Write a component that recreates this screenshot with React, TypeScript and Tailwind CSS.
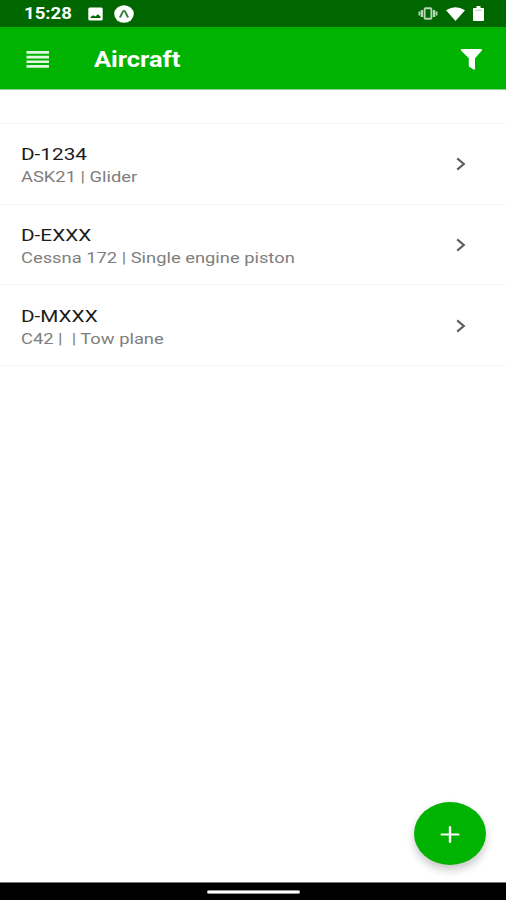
const aircraft = [
  { id: 'D-1234', info: 'ASK21 | Glider' },
  { id: 'D-EXXX', info: 'Cessna 172 | Single engine piston' },
  { id: 'D-MXXX', info: 'C42 |  | Tow plane' },
];

const StatusBar = () => (
  <div className="flex h-[27px] flex-none items-center bg-[#006700] pl-6 pr-[22px] text-white">
    <span className="w-[64px] flex-none">
      <span className="inline-block origin-left scale-x-[1.16] text-[16px] font-bold leading-[27px]">15:28</span>
    </span>
    {/* picture */}
    <svg className="mt-px h-[14px] w-[15px]" viewBox="0 0 15 14" fill="none">
      <rect x="0.3" y="0.5" width="14.4" height="13" rx="1.5" fill="#fff" />
      <path d="M2.5 11V10L5.3 8.300 7.300 9.600 10 7.300 12.500 9.800V11Z" fill="#006700" />
    </svg>
    {/* expo */}
    <svg className="ml-[11px] h-[18px] w-5" viewBox="0 0 20 18" fill="none">
      <ellipse cx="10" cy="9" rx="9.8" ry="8.7" fill="#fff" />
      <path d="M6.2 11.800C7.800 10 8.400 5.700 10 5.700S12.200 10 13.800 11.800" stroke="#34803a" strokeWidth="2" strokeLinecap="round" />
    </svg>
    <div className="flex-1" />
    {/* vibrate */}
    <svg className="h-[13px] w-5" viewBox="0 0 20 13" fill="none" stroke="#b5d5b5">
      <rect x="6.6" y="1.3" width="6.8" height="10.4" rx="1" strokeWidth="1.900" />
      <path d="M3.900 3V10M16.100 3V10" strokeWidth="2.200" />
      <path d="M1.500 4.500V8.500M18.500 4.500V8.500" strokeWidth="1.900" />
    </svg>
    {/* wifi */}
    <svg className="ml-2 h-[14px] w-[19px]" viewBox="0 0 19 14" fill="#fff">
      <path d="M0 3.3Q9.5-3 19 3.3L9.5 14Z" />
    </svg>
    {/* battery */}
    <svg className="ml-2 h-[15px] w-[11px]" viewBox="0 0 11 16" preserveAspectRatio="none" fill="#fff">
      <path d="M3.5 0h4v2H10q1 0 1 1v12q0 1-1 1H1q-1 0-1-1V3q0-1 1-1h2.5Z" />
      <path d="M2 4.5H9" stroke="#a8cba8" />
    </svg>
  </div>
);

const Header = () => (
  <div className="flex h-[63px] flex-none items-center border-b border-[#8fce8f] bg-[#00b300] pl-[26px] pr-[23px] pt-[3px] text-white">
    <svg className="h-[17px] w-[24px]" viewBox="0 0 24 17" fill="#e2f6e2">
      <path d="M.5 0h22.500v2.700H.5ZM.5 4.700h22.500v2.700H.5ZM.5 9.400h22.500v2.700H.5ZM.5 14.100h22.500v2.700H.5Z" />
    </svg>
    <h1 className="ml-[44px] flex-1 pt-px">
      <span className="inline-block origin-left scale-x-[1.155] text-[22px] font-bold leading-[30px]">Aircraft</span>
    </h1>
    <svg className="h-[21px] w-[23px]" viewBox="0 0 23 21" fill="#fff">
      <path d="M1.300 0H21.500Q22.600 .5 21.900 1.500L15 9.300V20Q14.500 21 13.500 20.600L8.800 17.500V9.300L1 1.500Q.3 .5 1.300 0Z" />
    </svg>
  </div>
);

const App = () => {
  return (
    <div className="flex h-[900px] w-[506px] flex-col overflow-hidden bg-white font-['Roboto',sans-serif]">
      <StatusBar />
      <Header />

      <main className="relative flex-1">
        <div className="h-[34px] border-b border-[#f4f4f4]" />
        {aircraft.map((item) => (
          <div
            key={item.id}
            className="flex h-[80.67px] items-center justify-between border-b border-[#f4f4f4] pl-[21px] pr-10"
          >
            <div className="flex flex-col items-start pt-1">
              <span className="origin-left scale-x-[1.22] text-[17px] leading-[23px] text-[#1c1c1c]">{item.id}</span>
              <span className="origin-left scale-x-[1.222] whitespace-pre text-[15px] leading-[22px] text-[#7e7e7e]">
                {item.info}
              </span>
            </div>
            <svg className="mt-px h-[14px] w-[10px]" viewBox="0 0 10 14" fill="none">
              <path d="M1.200 1.400 7.800 7 1.200 12.600" stroke="#606060" strokeWidth="2.200" />
            </svg>
          </div>
        ))}

        <button
          aria-label="Add aircraft"
          className="absolute bottom-[17px] right-5 flex h-[63px] w-[72px] items-center justify-center rounded-[50%] bg-[#00b300] pt-px shadow-[0_5px_8px_rgba(0,0,0,0.22)]"
        >
          <svg className="h-[17px] w-5" viewBox="0 0 20 17" fill="none" stroke="#fff" strokeLinecap="round">
            <path d="M1.500 8.500H18.500" strokeWidth="2" />
            <path d="M10 1.300V15.700" strokeWidth="2.400" />
          </svg>
        </button>
      </main>

      {/* system navigation bar */}
      <div className="flex h-[18px] flex-none items-center justify-center border-t border-[#777] bg-black">
        <div className="h-[4px] w-[93px] rounded-full border-y border-[#999] bg-white" />
      </div>
    </div>
  );
};

export default App;
